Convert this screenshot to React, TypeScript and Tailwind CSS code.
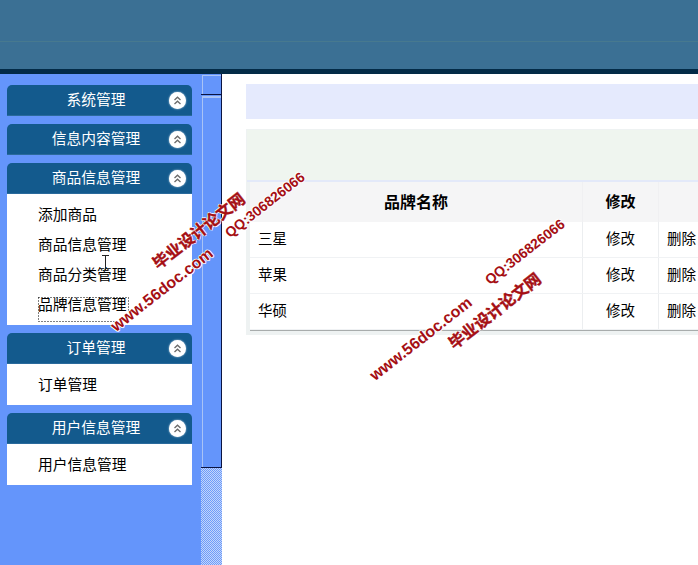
import React from "react";

const font = { fontFamily: '"Noto Sans CJK SC", "Liberation Sans", sans-serif' };

function Badge() {
  return (
    <span className="absolute right-[6px] top-[7px] flex h-[17px] w-[17px] items-center justify-center rounded-full bg-white shadow-[0_0_2px_#cfe0ee]">
      <svg width="11" height="11" viewBox="0 0 11 11" fill="none" stroke="#6a6a6a" strokeWidth="1.3">
        <path d="M2.5 5 L5.5 2.2 L8.5 5" />
        <path d="M2.5 9 L5.5 6.2 L8.5 9" />
      </svg>
    </span>
  );
}

function Panel({ title, items }: { title: string; items: string[] }) {
  return (
    <div className="w-[185px]">
      <div className="relative flex h-[31px] items-center justify-center rounded-t-[5px] border-b border-[#2a6a9c] bg-[#135a8d] pb-[2px] pr-[7px] text-[14.75px] text-white">
        {title}
        <Badge />
      </div>
      {items.length > 0 && (
        <ul className="bg-white pb-[5px] pt-[6px] text-[14.75px] text-black">
          {items.map((it) => (
            <li key={it} className="flex h-[30px] items-center pb-[1px] pl-[31px]">
              {it}
            </li>
          ))}
        </ul>
      )}
    </div>
  );
}

function Row({ name }: { name: string }) {
  return (
    <div className="flex h-[36px] border-b border-[#f0f2f4] bg-white text-[14.5px] text-black">
      <div className="flex w-[333px] items-center border-r border-[#eceef0] pb-[3px] pl-[8px]">{name}</div>
      <div className="flex w-[76px] items-center justify-center border-r border-[#eceef0] pb-[3px]">修改</div>
      <div className="flex flex-1 items-center pb-[3px] pl-[8px]">删除</div>
    </div>
  );
}

function Mark({ cls, text }: { cls: string; text: string }) {
  return (
    <span
      className={`pointer-events-none absolute -translate-x-1/2 -translate-y-1/2 -rotate-[38deg] whitespace-nowrap font-bold text-[#a50f14] [text-shadow:1px_0_0_#fff,-1px_0_0_#fff,0_1px_0_#fff,0_-1px_0_#fff] ${cls}`}
    >
      {text}
    </span>
  );
}

const latin = "[font-family:'Liberation_Sans',sans-serif]";
const heavy = "[-webkit-text-stroke:0.4px_#a50f14]";

export default function App() {
  return (
    <div className="relative flex h-[565px] w-[698px] flex-col overflow-hidden bg-white" style={font}>
      <header className="h-[74px] shrink-0 border-b-[5px] border-[#032b47] bg-[#3b7094]">
        <div className="h-[42px] border-b border-[#47798f]" />
      </header>
      <div className="flex min-h-0 flex-1">
        <aside className="flex w-[201px] shrink-0 flex-col gap-[8px] bg-[#6495fb] pl-[7px] pt-[11px]">
          <Panel title="系统管理" items={[]} />
          <Panel title="信息内容管理" items={[]} />
          <Panel title="商品信息管理" items={["添加商品", "商品信息管理", "商品分类管理", "品牌信息管理"]} />
          <Panel title="订单管理" items={["订单管理"]} />
          <Panel title="用户信息管理" items={["用户信息管理"]} />
        </aside>
        <div className="flex w-[21px] shrink-0 flex-col bg-[#6495fb] bg-[repeating-conic-gradient(#6e9bf9_0_25%,#c3d6fb_0_50%)] bg-[length:2px_2px]">
          <div className="h-[394px] border-b border-r border-b-[#0b1440] border-r-[#0b1440] bg-[#6495fb]">
            <div className="h-[21px] border-b border-b-[#0b1440] pl-px pt-px">
              <div className="h-full border-l border-t border-[#a9c3f5]" />
            </div>
            <div className="h-[372px] pl-px pt-px">
              <div className="h-full border-l border-t-2 border-[#a9c3f5]" />
            </div>
          </div>
        </div>
        <main className="min-w-0 flex-1 bg-white pl-[24px] pt-[10px]">
          <div className="h-[35px] bg-[#e5eafd]" />
          <div className="mt-[10px] w-[480px] border border-[#eef2f2] bg-[#eef2f2] pb-[3px] pl-[3px]">
            <div className="-ml-[3px] h-[52px] border-b-2 border-[#e3e9f9] bg-[#eff5ef]" />
            <div className="flex h-[40px] bg-[#f5f5f6] font-bold text-black">
              <div className="flex w-[333px] items-center justify-center border-r border-[#f0f0f2] pb-[2px] text-[16px]">品牌名称</div>
              <div className="flex w-[76px] items-center justify-center border-r border-[#f0f0f2] pb-[2px] text-[15px]">修改</div>
              <div className="flex-1" />
            </div>
            <Row name="三星" />
            <Row name="苹果" />
            <Row name="华硕" />
            <div className="h-px bg-[#a8acac]" />
          </div>
        </main>
      </div>
      <svg className="pointer-events-none absolute left-[38px] top-[297px]" width="92" height="26" viewBox="0 0 92 26" fill="none" stroke="#000" strokeWidth="1" strokeDasharray="1 2">
        <path d="M.5 .5H90.5V15M.5 .5V24.5H79" />
      </svg>
      <svg className="pointer-events-none absolute left-[101px] top-[255px]" width="9" height="16" viewBox="0 0 9 16" fill="none" stroke="#222" strokeWidth="1">
        <path d="M1 .5H8M4.5 .5V15.5M2 15.5H7" />
      </svg>
      <Mark cls={`left-[198px] top-[230px] text-[16px] ${heavy}`} text="毕业设计论文网" />
      <Mark cls={`left-[162px] top-[290px] text-[16px] ${latin}`} text="www.56doc.com" />
      <Mark cls={`left-[265px] top-[205px] text-[14px] ${latin}`} text="QQ:306826066" />
      <Mark cls={`left-[494px] top-[310px] text-[16px] ${heavy}`} text="毕业设计论文网" />
      <Mark cls={`left-[421px] top-[339px] text-[16px] ${latin}`} text="www.56doc.com" />
      <Mark cls={`left-[525px] top-[252px] text-[14px] ${latin}`} text="QQ:306826066" />
    </div>
  );
}
